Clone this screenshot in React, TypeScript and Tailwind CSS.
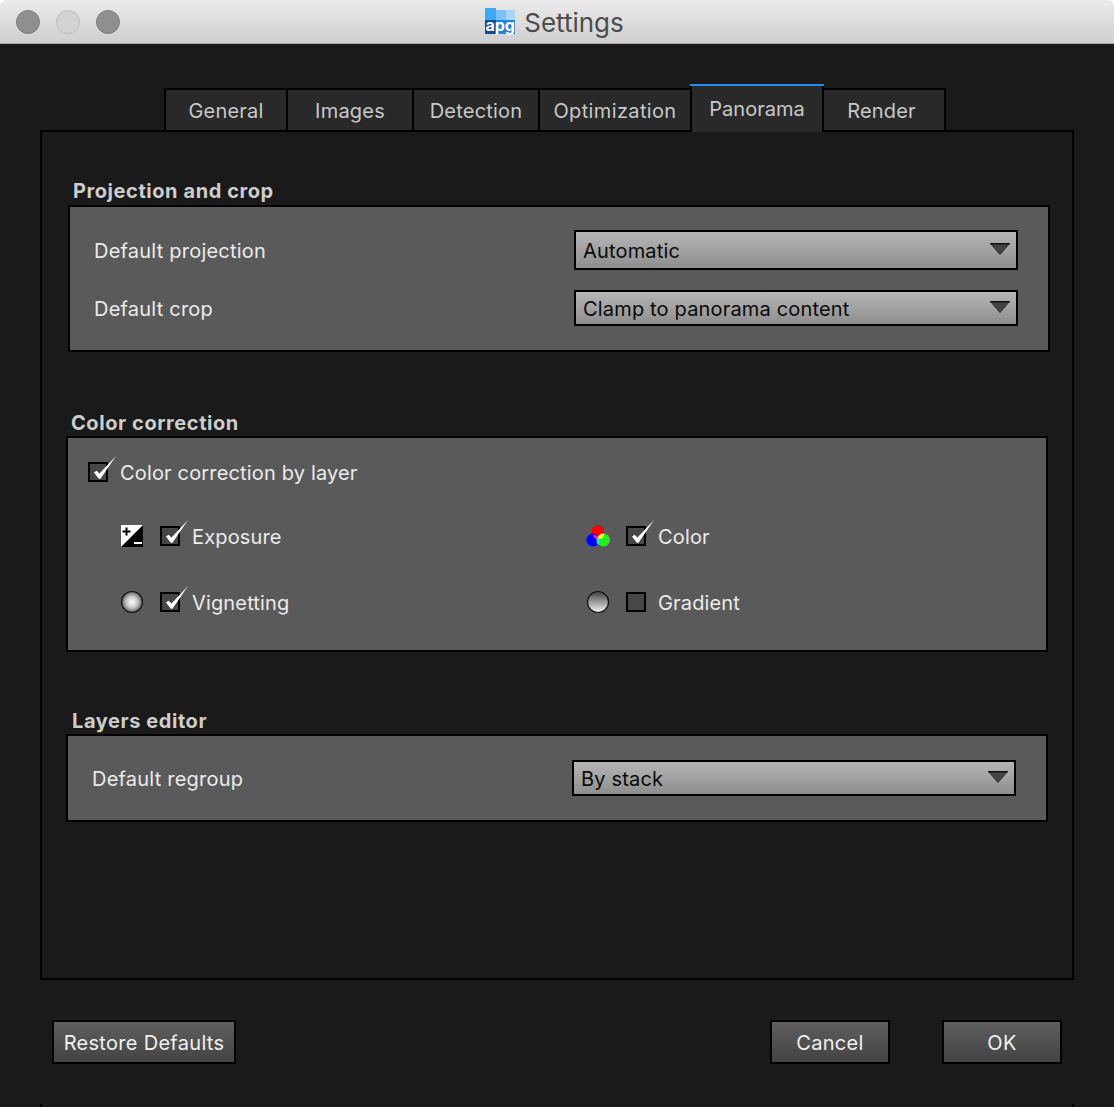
import React from "react";

function Check({ checked }: { checked: boolean }) {
  return (
    <span className="relative block w-[20px] h-[20px] shrink-0 border-2 border-black bg-[#474747]">
      {checked && (
        <svg className="absolute -left-[2px] -top-[2px] overflow-visible" width="20" height="20" viewBox="0 0 20 20">
          <polygon points="6,10.5 8.5,8.8 11.5,11.5 28,-6 12.5,16.8 10.8,16.8" fill="#ffffff" />
        </svg>
      )}
    </span>
  );
}

function Combo({ text, h }: { text: string; h: string }) {
  return (
    <div className={`${h} w-[444px] flex items-center justify-between border-2 border-black bg-gradient-to-b from-[#b6b6b6] to-[#8e8e8e] pl-[7px] pr-[6px]`}>
      <span className="pt-[2px] text-[20px] leading-none tracking-[0.17px] text-[#0a0a0a]">{text}</span>
      <svg width="20" height="12" viewBox="0 0 20 12" className="-mt-[2px]">
        <polygon points="0.5,0.5 19.5,0.5 10,11.5" fill="#444444" stroke="#2a2a2a" strokeWidth="1" />
        <line x1="0" y1="0.7" x2="20" y2="0.7" stroke="#111111" strokeWidth="1.4" />
      </svg>
    </div>
  );
}

function Tab({ label, w, active, extra = "tracking-[0.2px]" }: { label: string; w: string; active?: boolean; extra?: string }) {
  if (active) {
    return (
      <div className={`${w} -ml-[2px] h-[48px] -mb-[2px] relative z-10 flex flex-col`}>
        <div className="h-[2px] bg-[#1e8cf0]" />
        <div className="flex-1 bg-[#292929] border-x-2 border-black flex justify-center pt-[9px] text-[20px] leading-[28px] text-[#c8c8c8]">
          {label}
        </div>
      </div>
    );
  }
  return (
    <div className={`${w} ${extra} -ml-[2px] first:ml-0 h-[42px] border-x-2 border-t-2 border-black bg-[#292929] flex items-center justify-center pt-[1px] text-[20px] leading-none text-[#c8c8c8]`}>
      {label}
    </div>
  );
}

function ExposureIcon() {
  return (
    <svg width="24" height="24" viewBox="0 0 24 24" className="shrink-0">
      <rect x="1" y="1" width="22" height="22" fill="#ffffff" />
      <polygon points="23,1 23,23 1,23" fill="#000000" />
      <path d="M6.5 3.5v8M2.5 7.5h8" stroke="#000000" strokeWidth="2" fill="none" />
      <path d="M14 19h8" stroke="#ffffff" strokeWidth="2" fill="none" />
    </svg>
  );
}

function VignetteIcon() {
  return (
    <svg width="24" height="24" viewBox="0 0 24 24" className="shrink-0">
      <defs>
        <radialGradient id="vig" cx="50%" cy="50%" r="50%">
          <stop offset="0%" stopColor="#ffffff" />
          <stop offset="55%" stopColor="#c4c4c4" />
          <stop offset="100%" stopColor="#606060" />
        </radialGradient>
      </defs>
      <circle cx="12" cy="12" r="10.5" fill="url(#vig)" stroke="#111111" strokeWidth="1.2" />
    </svg>
  );
}

function GradientIcon() {
  return (
    <svg width="24" height="24" viewBox="0 0 24 24" className="shrink-0">
      <defs>
        <linearGradient id="grad" x1="0" y1="0" x2="0" y2="1">
          <stop offset="0%" stopColor="#404040" />
          <stop offset="100%" stopColor="#f6f6f6" />
        </linearGradient>
      </defs>
      <circle cx="12" cy="12" r="10.5" fill="url(#grad)" stroke="#111111" strokeWidth="1.2" />
    </svg>
  );
}

function RgbIcon() {
  return (
    <svg width="24" height="24" viewBox="0 0 24 24" className="shrink-0">
      <circle cx="12" cy="7.5" r="6.5" fill="#ff0000" />
      <circle cx="7" cy="16" r="6.5" fill="#0000ff" />
      <circle cx="17.5" cy="16" r="6.5" fill="#22ee22" />
      <path d="M6.5 11a6.5 6.5 0 0 1 5.5 1.5 6.5 6.5 0 0 1 0 3 6.5 6.5 0 0 1 -5 -4z" fill="#ee22ee" />
      <path d="M12 12.5a6.5 6.5 0 0 1 6 -3 6.5 6.5 0 0 1 -1 4 6.5 6.5 0 0 1 -5 1.5z" fill="#ffee33" />
      <path d="M12 13a6.5 6.5 0 0 1 0 8 6.5 6.5 0 0 1 0 -8z" fill="#22dddd" />
    </svg>
  );
}

function AppIcon() {
  return (
    <div className="w-[30px] h-[26px] flex flex-col shrink-0 -mt-[2px]">
      <div className="h-[12px] flex">
        <div className="w-[11px] bg-[#3fa9f5]" />
        <div className="w-[10px] mt-[2px] bg-[#7cc2fa]" />
        <div className="w-[9px] mt-[2px] bg-[#a6d6fc]" />
      </div>
      <div className="h-[14px] flex">
        <div className="w-[11px] bg-[#0b4f94]" />
        <div className="w-[19px] bg-[#1d86dc]" />
      </div>
      <div className="h-[14px] -mt-[14px] text-center text-[16px] leading-[10px] font-bold text-white">apg</div>
    </div>
  );
}

function Option({ icon, label, checked }: { icon: React.ReactNode; label: string; checked: boolean }) {
  return (
    <div className="flex items-center h-[24px]">
      <div className="w-[40px] shrink-0">{icon}</div>
      <Check checked={checked} />
      <span className="ml-[12px] pt-[2px] text-[20px] leading-none tracking-[0.15px] text-[#ebebeb]">{label}</span>
    </div>
  );
}

function Btn({ label, w }: { label: string; w: string }) {
  return (
    <div className={`${w} h-[44px] border-2 border-black bg-gradient-to-b from-[#5f5f5f] to-[#434343] flex items-center justify-center pt-[2px] text-[20px] leading-none tracking-[0.3px] text-[#f0f0f0]`}>
      {label}
    </div>
  );
}

const Title = ({ children, cls }: { children: string; cls: string }) => (
  <div className={`${cls} h-[24px] flex items-center text-[20px] leading-none font-bold tracking-[0.57px] text-[#cdcdcd]`}>{children}</div>
);

const Label = ({ children }: { children: string }) => (
  <span className="pt-[2px] text-[20px] leading-none tracking-[0.22px] text-[#ebebeb]">{children}</span>
);

export default function App() {
  return (
    <div className="w-[1114px] h-[1107px] bg-white flex flex-col overflow-hidden" style={{ fontFamily: "Inter, 'Liberation Sans', sans-serif" }}>
      <div className="h-[44px] rounded-t-[6px] bg-gradient-to-b from-[#ebebeb] to-[#cfcfcf] border-b border-[#aaaaaa] relative flex items-center justify-center shrink-0">
        <div className="absolute left-[16px] top-[10px] flex gap-[16px]">
          <span className="w-[24px] h-[24px] rounded-full bg-[#8f8f92] border border-[#7d7d80]" />
          <span className="w-[24px] h-[24px] rounded-full bg-[#d2d2d2] border border-[#bdbdbd]" />
          <span className="w-[24px] h-[24px] rounded-full bg-[#8f8f92] border border-[#7d7d80]" />
        </div>
        <div className="flex items-center gap-[9px] mr-[5px]">
          <AppIcon />
          <span className="pt-[2px] text-[26px] leading-none text-[#4c4c4c]">Settings</span>
        </div>
      </div>
      <div className="flex-1 bg-[#1a1a1a] flex flex-col pl-[40px] pr-[40px]">
        <div className="h-[86px] flex items-end pl-[124px] shrink-0">
          <Tab label="General" w="w-[124px]" />
          <Tab label="Images" w="w-[128px]" />
          <Tab label="Detection" w="w-[128px]" />
          <Tab label="Optimization" w="w-[154px]" extra="tracking-[0.36px]" />
          <Tab label="Panorama" w="w-[134px]" active />
          <Tab label="Render" w="w-[124px]" extra="pr-[5px] tracking-[0.2px]" />
        </div>
        <div className="h-[850px] border-2 border-black pt-[47px] shrink-0">
          <div className="ml-[26px] w-[982px]">
            <Title cls="pl-[5px] pb-[2px] h-[26px]">Projection and crop</Title>
            <div className="h-[147px] border-2 border-black bg-[#5a5a5a] pl-[24px] pr-[30px] pt-[23px] flex flex-col gap-[20px]">
              <div className="flex items-center justify-between">
                <Label>Default projection</Label>
                <Combo text="Automatic" h="h-[40px]" />
              </div>
              <div className="flex items-center justify-between">
                <Label>Default crop</Label>
                <Combo text="Clamp to panorama content" h="h-[36px]" />
              </div>
            </div>
          </div>
          <div className="ml-[24px] w-[982px] mt-[60px]">
            <Title cls="pl-[5px] pb-[2px]">Color correction</Title>
            <div className="h-[216px] border-2 border-black bg-[#5a5a5a] pl-[20px] pt-[24px]">
              <div className="flex items-center h-[20px]">
                <Check checked />
                <span className="ml-[12px] pt-[2px] text-[20px] leading-none tracking-[0.16px] text-[#ebebeb]">Color correction by layer</span>
              </div>
              <div className="ml-[32px] mt-[42px] grid grid-cols-[466px_1fr] gap-y-[42px]">
                <Option icon={<ExposureIcon />} label="Exposure" checked />
                <Option icon={<RgbIcon />} label="Color" checked />
                <Option icon={<VignetteIcon />} label="Vignetting" checked />
                <Option icon={<GradientIcon />} label="Gradient" checked={false} />
              </div>
            </div>
          </div>
          <div className="ml-[24px] w-[982px] mt-[58px]">
            <Title cls="pl-[6px] pb-[2px]">Layers editor</Title>
            <div className="h-[88px] border-2 border-black bg-[#5a5a5a] pl-[24px] pr-[30px] pt-[24px]">
              <div className="flex items-center justify-between">
                <Label>Default regroup</Label>
                <Combo text="By stack" h="h-[36px]" />
              </div>
            </div>
          </div>
        </div>
        <div className="mt-[40px] px-[12px] flex items-center shrink-0">
          <Btn label="Restore Defaults" w="w-[184px]" />
          <div className="ml-auto flex gap-[52px]">
            <Btn label="Cancel" w="w-[120px]" />
            <Btn label="OK" w="w-[120px]" />
          </div>
        </div>
        <div className="mt-auto h-[3px] border-x-2 border-black shrink-0" />
      </div>
    </div>
  );
}
